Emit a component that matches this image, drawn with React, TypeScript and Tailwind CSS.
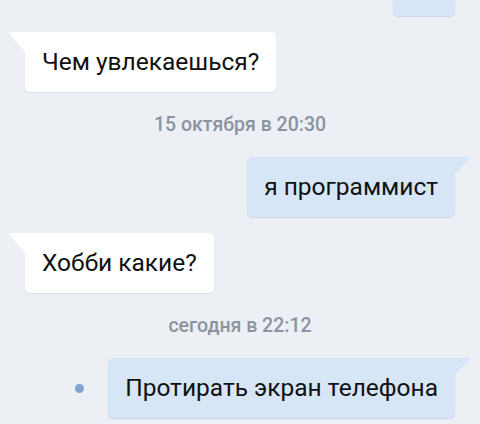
import React from "react";

type Msg =
  | { kind: "in"; text: string }
  | { kind: "out"; text: string; unread?: boolean }
  | { kind: "date"; text: string };

const messages: Msg[] = [
  { kind: "in", text: "Чем увлекаешься?" },
  { kind: "date", text: "15 октября в 20:30" },
  { kind: "out", text: "я программист" },
  { kind: "in", text: "Хобби какие?" },
  { kind: "date", text: "сегодня в 22:12" },
  { kind: "out", text: "Протирать экран телефона", unread: true },
];

const InBubble: React.FC<{ text: string }> = ({ text }) => (
  <div className="relative ml-[25px] self-start">
    <svg className="absolute -left-[17px] top-0" width="18" height="21" viewBox="0 0 18 21">
      <path d="M18 0 L2 0 Q0 0 1.2 1.4 L18 21 Z" fill="#ffffff" />
    </svg>
    <div className="h-[60px] flex items-center px-[17px] bg-white rounded-[5px] rounded-tl-none shadow-[0_1px_1px_rgba(0,0,0,0.08)] text-[24.5px] text-[#111]">
      {text}
    </div>
  </div>
);

const OutBubble: React.FC<{ text: string; unread?: boolean }> = ({ text, unread }) => (
  <div className="flex items-center self-end mr-[25px]">
    {unread && <span className="w-[9px] h-[9px] rounded-full bg-[#7ea3cc] mr-[24px]" />}
    <div className="relative">
      <svg className="absolute -right-[16px] top-0" width="17" height="18" viewBox="0 0 17 18">
        <path d="M0 0 L15 0 Q17 0 15.8 1.4 L0 18 Z" fill="#d7e6f7" />
      </svg>
      <div className="h-[60px] flex items-center px-[17px] bg-[#d7e6f7] rounded-[5px] rounded-tr-none shadow-[0_1px_1px_rgba(60,90,130,0.18)] text-[24.5px] text-[#111]">
        {text}
      </div>
    </div>
  </div>
);

export default function App() {
  return (
    <div
      className="w-[480px] h-[424px] overflow-hidden bg-[#ecf0f5] flex flex-col"
      style={{ fontFamily: "Roboto, 'Noto Sans', sans-serif" }}
    >
      {/* partially scrolled-off message */}
      <div className="self-end mr-[25px] -mt-[44px] mb-[16px] w-[62px] h-[60px] bg-[#d7e6f7] rounded-[5px] shadow-[0_1px_1px_rgba(60,90,130,0.18)]" />
      {messages.map((m, i) => {
        if (m.kind === "date")
          return (
            <div key={i} className="h-[65px] flex items-center justify-center text-[19.5px] font-medium text-[#8b949e]">
              {m.text}
            </div>
          );
        const next = messages[i + 1];
        const gap = next && next.kind !== "date" ? "mb-[16px]" : "";
        return (
          <div key={i} className={`flex flex-col ${gap}`}>
            {m.kind === "in" ? <InBubble text={m.text} /> : <OutBubble text={m.text} unread={m.unread} />}
          </div>
        );
      })}
    </div>
  );
}
